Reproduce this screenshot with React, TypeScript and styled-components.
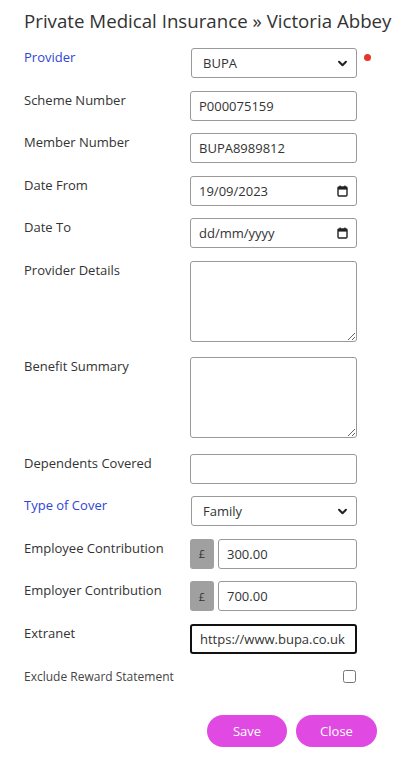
import React from 'react';
import styled, { createGlobalStyle } from 'styled-components';

const GlobalStyle = createGlobalStyle`
  body {
    margin: 0;
    background: #fff;
    font-family: "Open Sans", "Liberation Sans", sans-serif;
    color: #333;
  }
`;

const Page = styled.div`
  width: 405px;
  padding: 0 0 0 24px;
  box-sizing: border-box;
  overflow: hidden;
`;

const Titulo = styled.h1`
  margin: 0;
  padding-top: 8px;
  height: 40px;
  font-size: 18.7px;
  font-weight: 400;
  color: #333;
  white-space: nowrap;
`;

const Row = styled.div<{ $tall?: boolean }>`
  display: flex;
  align-items: flex-start;
  margin-bottom: ${(p) => (p.$tall ? '15.5px' : '12.5px')};
`;

const Label = styled.div<{ $blue?: boolean }>`
  width: 166px;
  flex-shrink: 0;
  padding-top: 0;
  font-size: 13px;
  line-height: 18px;
  color: ${(p) => (p.$blue ? '#2f45d6' : '#333')};
`;

const Control = styled.div`
  width: 167px;
  display: flex;
  align-items: center;
  gap: 4px;
  position: relative;
`;

const Input = styled.input<{ $focus?: boolean }>`
  box-sizing: border-box;
  width: 100%;
  height: 30px;
  padding: 0 8px;
  border: ${(p) => (p.$focus ? '2px solid #111' : '1px solid #999')};
  border-radius: 3px;
  font-family: "Open Sans", "Liberation Sans", sans-serif;
  font-size: 13px;
  color: #333;
  outline: none;
`;

const Area = styled.textarea`
  box-sizing: border-box;
  width: 100%;
  height: 81px;
  border: 1px solid #999;
  border-radius: 3px;
  font-family: "Open Sans", sans-serif;
  font-size: 13px;
  display: block;
`;

const Box = styled.div<{ $select?: boolean }>`
  box-sizing: border-box;
  width: 100%;
  height: 30px;
  padding: 0 8px 0 ${(p) => (p.$select ? '11px' : '8px')};
  border: 1px solid #999;
  border-radius: 3px;
  display: flex;
  align-items: center;
  justify-content: space-between;
  font-size: 13px;
  color: #333;
  margin-left: ${(p) => (p.$select ? '1px' : '0')};
`;

const Prefix = styled.div`
  width: 24px;
  height: 30px;
  flex-shrink: 0;
  background: #a0a0a0;
  border-radius: 3px;
  display: flex;
  align-items: center;
  justify-content: center;
  font-size: 11px;
  color: #333;
`;

const Dot = styled.span`
  position: absolute;
  right: -14px;
  top: 6px;
  width: 7px;
  height: 7px;
  border-radius: 50%;
  background: #e8352b;
`;

const CheckRow = styled.div`
  display: flex;
  align-items: center;
  justify-content: space-between;
  width: 333px;
  font-size: 12px;
  color: #444;
  margin-top: 14px;
`;

const Check = styled.input`
  width: 13px;
  height: 13px;
  margin: 0 1px 0 0;
`;

const Botoes = styled.div`
  display: flex;
  justify-content: flex-end;
  gap: 9px;
  width: 353px;
  margin-top: 30px;
`;

const Botao = styled.button<{ $w: number }>`
  width: ${(p) => p.$w}px;
  height: 32px;
  border: none;
  border-radius: 16px;
  background: #e04ae2;
  color: #fff;
  font-family: "Open Sans", sans-serif;
  font-size: 13px;
`;

const Chevron = () => (
  <svg width="11" height="11" viewBox="0 0 16 16">
    <path d="M3 5.5l5 5 5-5" fill="none" stroke="#222" strokeWidth="3" strokeLinecap="round" strokeLinejoin="round" />
  </svg>
);

const Calendar = () => (
  <svg width="11" height="12" viewBox="0 0 11 12">
    <rect x="1" y="2" width="9" height="9" fill="none" stroke="#222" strokeWidth="1.4" rx="1" />
    <rect x="1" y="2" width="9" height="2.6" fill="#222" />
    <rect x="2.5" y="0.5" width="1.2" height="2" fill="#222" />
    <rect x="7.3" y="0.5" width="1.2" height="2" fill="#222" />
  </svg>
);

export default function App() {
  return (
    <Page>
      <GlobalStyle />
      <Titulo>Private Medical Insurance » Victoria Abbey</Titulo>
      <Row>
        <Label $blue>Provider</Label>
        <Control>
          <Box $select>
            BUPA
            <Chevron />
          </Box>
          <Dot />
        </Control>
      </Row>
      <Row>
        <Label>Scheme Number</Label>
        <Control><Input defaultValue="P000075159" /></Control>
      </Row>
      <Row>
        <Label>Member Number</Label>
        <Control><Input defaultValue="BUPA8989812" /></Control>
      </Row>
      <Row>
        <Label>Date From</Label>
        <Control>
          <Box>
            19/09/2023
            <Calendar />
          </Box>
        </Control>
      </Row>
      <Row>
        <Label>Date To</Label>
        <Control>
          <Box>
            dd/mm/yyyy
            <Calendar />
          </Box>
        </Control>
      </Row>
      <Row $tall>
        <Label>Provider Details</Label>
        <Control><Area /></Control>
      </Row>
      <Row $tall>
        <Label>Benefit Summary</Label>
        <Control><Area /></Control>
      </Row>
      <Row>
        <Label>Dependents Covered</Label>
        <Control><Input /></Control>
      </Row>
      <Row>
        <Label $blue>Type of Cover</Label>
        <Control>
          <Box $select>
            Family
            <Chevron />
          </Box>
        </Control>
      </Row>
      <Row>
        <Label>Employee Contribution</Label>
        <Control>
          <Prefix>£</Prefix>
          <Input defaultValue="300.00" />
        </Control>
      </Row>
      <Row>
        <Label>Employer Contribution</Label>
        <Control>
          <Prefix>£</Prefix>
          <Input defaultValue="700.00" />
        </Control>
      </Row>
      <Row style={{ marginBottom: 0 }}>
        <Label>Extranet</Label>
        <Control><Input $focus defaultValue="https://www.bupa.co.uk" /></Control>
      </Row>
      <CheckRow>
        Exclude Reward Statement
        <Check type="checkbox" />
      </CheckRow>
      <Botoes>
        <Botao $w={80}>Save</Botao>
        <Botao $w={81}>Close</Botao>
      </Botoes>
    </Page>
  );
}
